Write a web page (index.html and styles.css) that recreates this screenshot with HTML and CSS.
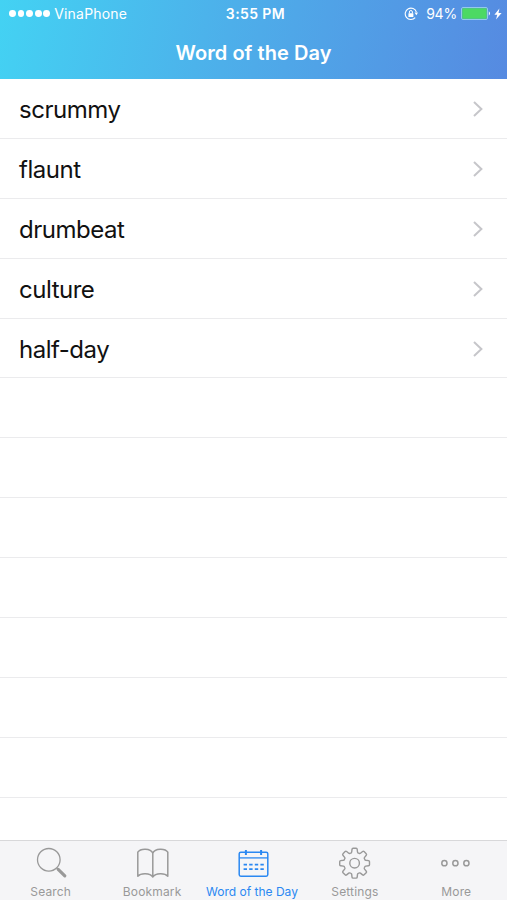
FILE: index.html
```
<!DOCTYPE html>
<html lang="en">
<head>
	<meta charset="utf-8">
	<title>Word of the Day</title>
	<link rel="stylesheet" href="styles.css">
</head>
<body>
<div class="app">
	<header class="header">
		<div class="status">
			<div class="carrier">
				<span class="dots"><i></i><i></i><i></i><i></i><i></i></span>
				<span class="carrier-name">VinaPhone</span>
			</div>
			<div class="time">3:55 PM</div>
			<div class="power">
				<svg class="lock" width="14" height="14" viewBox="0 0 14 14">
					<path d="M11.2 10.6A5.7 5.7 0 1 1 12.4 5.2" fill="none" stroke="#fff" stroke-width="1.1"/>
					<path d="M10.5 5.6h3.5L12.4 8.2z" fill="#fff"/>
					<rect x="4.4" y="6.2" width="5" height="3.8" rx=".5" fill="#fff"/>
					<path d="M5.4 6.4V5a1.5 1.5 0 0 1 3 0v1.4" fill="none" stroke="#fff"/>
				</svg>
				<span class="percent">94%</span>
				<svg class="battery" width="31" height="13" viewBox="0 0 31 13">
					<rect x=".5" y=".5" width="26" height="12" rx="1.5" fill="none" stroke="#a5d8ee" stroke-width=".8"/>
					<rect x="1.3" y="1.3" width="24.4" height="10.4" rx=".8" fill="#4cd964"/>
					<path d="M27.8 4.3q2.4 2.2 0 4.4z" fill="#fff"/>
				</svg>
				<svg class="bolt" width="8" height="12" viewBox="0 0 8 12">
					<path d="M5.4.5L.4 6.8h2.9L2 11.6l5.6-6.5H4.5z" fill="#fff"/>
				</svg>
			</div>
		</div>
		<h1 class="title">Word of the Day</h1>
	</header>

	<ul class="list">
		<li class="row"><span>scrummy</span><svg class="arrow" width="12" height="18" viewBox="0 0 12 18"><path d="M2 2l7.4 7L2 16"/></svg></li>
		<li class="row"><span>flaunt</span><svg class="arrow" width="12" height="18" viewBox="0 0 12 18"><path d="M2 2l7.4 7L2 16"/></svg></li>
		<li class="row"><span>drumbeat</span><svg class="arrow" width="12" height="18" viewBox="0 0 12 18"><path d="M2 2l7.4 7L2 16"/></svg></li>
		<li class="row"><span>culture</span><svg class="arrow" width="12" height="18" viewBox="0 0 12 18"><path d="M2 2l7.4 7L2 16"/></svg></li>
		<li class="row"><span>half-day</span><svg class="arrow" width="12" height="18" viewBox="0 0 12 18"><path d="M2 2l7.4 7L2 16"/></svg></li>
		<li class="row"></li>
		<li class="row"></li>
		<li class="row"></li>
		<li class="row"></li>
		<li class="row"></li>
		<li class="row"></li>
		<li class="row"></li>
	</ul>

	<nav class="tabs">
		<a class="tab">
			<svg width="34" height="34" viewBox="0 0 34 34">
				<circle cx="14.8" cy="13.8" r="11.3" stroke-width="1.3"/>
				<path d="M22.8 22l1.8 1.7"/>
				<path d="M24.2 23.4l6.6 6.4" stroke-width="3.2" stroke-linecap="round"/>
			</svg>
			<span>Search</span>
		</a>
		<a class="tab">
			<svg width="34" height="34" viewBox="0 0 34 34">
				<path d="M17.8 31V7.2C15.6 2 5.4 2 2.8 6.2V30.2C5.8 26.8 15 26.8 17.8 31C20.6 26.8 29.8 26.8 32.8 30.2V6.2C30.2 2 20 2 17.8 7.2" stroke-linejoin="round"/>
			</svg>
			<span>Bookmark</span>
		</a>
		<a class="tab active">
			<svg width="34" height="34" viewBox="0 0 34 34">
				<rect x="3.2" y="6.2" width="28.6" height="24" rx="1.6" stroke-width="1.5"/>
				<path d="M3.2 11.9h28.6" stroke-width="1.3"/>
				<path d="M9.9 4v5M25.1 4v5" stroke-width="2"/>
				<path d="M7.6 18.6h20.5M7.6 23.2h20.5" stroke-width="1.8" stroke-dasharray="3.4 2.2"/>
			</svg>
			<span>Word of the Day</span>
		</a>
		<a class="tab">
			<svg width="34" height="34" viewBox="0 0 34 34">
				<defs>
					<path id="tooth" d="M-4.3-10.3Q-3.1-9.9-2.9-11.2L-2.6-13.9Q-2.5-14.9-1.5-14.9H1.5Q2.5-14.9 2.6-13.9L2.9-11.2Q3.1-9.9 4.3-10.3"/>
				</defs>
				<g transform="translate(16.6 17.2)" stroke-width="1.4">
					<circle r="4.8"/>
					<use href="#tooth"/>
					<use href="#tooth" transform="rotate(45)"/>
					<use href="#tooth" transform="rotate(90)"/>
					<use href="#tooth" transform="rotate(135)"/>
					<use href="#tooth" transform="rotate(180)"/>
					<use href="#tooth" transform="rotate(225)"/>
					<use href="#tooth" transform="rotate(270)"/>
					<use href="#tooth" transform="rotate(315)"/>
				</g>
			</svg>
			<span>Settings</span>
		</a>
		<a class="tab">
			<svg width="34" height="34" viewBox="0 0 34 34">
				<g stroke-width="1.5">
					<circle cx="5.4" cy="17.2" r="2.6"/>
					<circle cx="16.4" cy="17.2" r="2.6"/>
					<circle cx="27.4" cy="17.2" r="2.6"/>
				</g>
			</svg>
			<span>More</span>
		</a>
	</nav>
</div>
</body>
</html>
```
FILE: styles.css
```
body{
	margin:0;
	background-color:#fff;
	font-family: Inter, "Liberation Sans", sans-serif;
}
.app{
	display: flex;
	flex-direction: column;
	height:900px;
	overflow: hidden;
}
.header{
	flex:none;
	height:79px;
	color:#fff;
	background: linear-gradient(102deg, #43d2f3 0%, #4dafea 45%, #568ae1 100%);
}
.status{
	display: grid;
	grid-template-columns: 1fr auto 1fr;
	align-items: center;
	height:27px;
	padding:0 5px 0 9px;
	font-size: 14px;
	line-height: 27px;
}
.carrier, .power, .dots{
	display: flex;
	align-items: center;
}
.dots{
	gap:1.8px;
	margin-right:4px;
}
.dots i{
	width:6.8px;
	height:6.8px;
	border-radius: 50%;
	background-color:#fff;
}
.carrier-name{
	letter-spacing: 0.2px;
}
.time{
	font-weight: 600;
	font-size: 14px;
	letter-spacing: 0.4px;
}
.power{
	justify-content: flex-end;
}
.percent{
	margin:0 4px 0 8px;
	letter-spacing: -0.2px;
}
.bolt{
	margin-left:2px;
}
.title{
	margin:0;
	font-size: 20px;
	line-height: 52px;
	font-weight: 600;
	letter-spacing: 0.05px;
	text-align: center;
}

.list{
	flex:1;
	min-height:0;
	margin:0;
	padding:0;
	list-style-type: none;
}
.row{
	display: flex;
	align-items: center;
	justify-content: space-between;
	box-sizing: border-box;
	height:59.9px;
	padding:1px 23.5px 0 19px;
	border-bottom: 1px solid #ebebed;
	font-size: 24px;
	letter-spacing: -0.48px;
	color:#111;
}
.row span{
	padding-top:1px;
}
.arrow path{
	fill:none;
	stroke:#c6c6ca;
	stroke-width:2;
}

.tabs{
	flex:none;
	display: grid;
	grid-template-columns: repeat(5, 1fr);
	box-sizing: border-box;
	height:60px;
	border-top: 1px solid #d8d8da;
	background-color:#f5f5f7;
}
.tab{
	display: flex;
	flex-direction: column;
	align-items: center;
	padding-top:5px;
	color:#999;
	font-size: 12px;
	line-height: 24px;
	white-space: nowrap;
}
.tab svg{
	fill:none;
	stroke:currentColor;
	stroke-width:1.5;
}
.tab span{
	letter-spacing: 0.15px;
}
.tab.active{
	color:#2a88f2;
}
.tab.active span{
	margin-right:3px;
	letter-spacing: 0;
}
```
